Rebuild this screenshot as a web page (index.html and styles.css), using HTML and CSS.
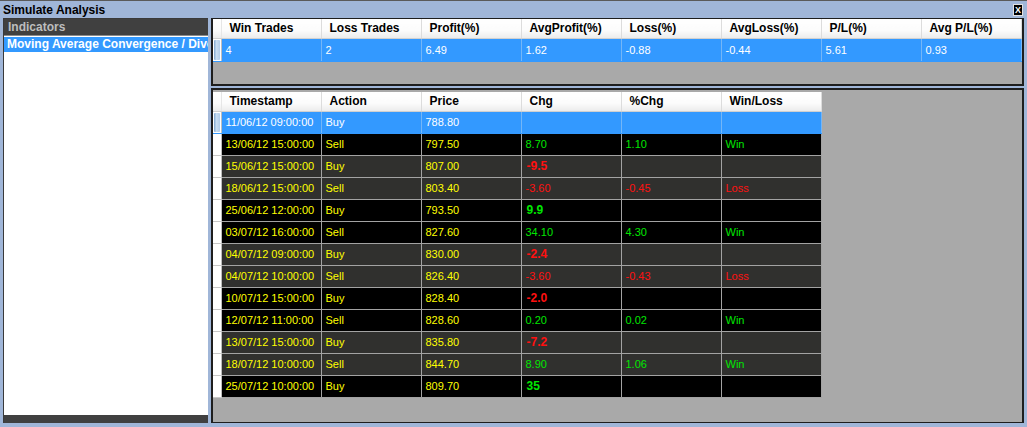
FILE: index.html
```html
<!DOCTYPE html>
<html lang="en">
<head>
    <meta charset="UTF-8">
    <title>Simulate Analysis</title>
    <link rel="stylesheet" href="styles.css">
</head>
<body>
    <div class="window">
        <div class="titlebar">
            <span class="title">Simulate Analysis</span>
            <span class="close">X</span>
        </div>

        <div class="main">
            <div class="indicators">
                <div class="ind-header">Indicators</div>
                <div class="ind-list">
                    <div class="ind-item selected">Moving Average Convergence / Divergence</div>
                </div>
                <div class="ind-footer"></div>
            </div>

            <div class="results">
                <div class="panel summary">
                    <table class="grid">
                        <colgroup>
                            <col class="c-ind">
                            <col class="c-col"><col class="c-col"><col class="c-col"><col class="c-col">
                            <col class="c-col"><col class="c-col"><col class="c-col"><col class="c-col">
                        </colgroup>
                        <thead>
                            <tr>
                                <th class="ind"></th>
                                <th>Win Trades</th>
                                <th>Loss Trades</th>
                                <th>Profit(%)</th>
                                <th>AvgProfit(%)</th>
                                <th>Loss(%)</th>
                                <th>AvgLoss(%)</th>
                                <th>P/L(%)</th>
                                <th>Avg P/L(%)</th>
                            </tr>
                        </thead>
                        <tbody>
                            <tr class="current">
                                <td class="ind"><span class="marker"></span></td>
                                <td>4</td>
                                <td>2</td>
                                <td>6.49</td>
                                <td>1.62</td>
                                <td>-0.88</td>
                                <td>-0.44</td>
                                <td>5.61</td>
                                <td>0.93</td>
                            </tr>
                        </tbody>
                    </table>
                </div>

                <div class="panel trades">
                    <table class="grid">
                        <colgroup>
                            <col class="c-ind">
                            <col class="c-col"><col class="c-col"><col class="c-col">
                            <col class="c-col"><col class="c-col"><col class="c-col">
                        </colgroup>
                        <thead>
                            <tr>
                                <th class="ind"></th>
                                <th>Timestamp</th>
                                <th>Action</th>
                                <th>Price</th>
                                <th>Chg</th>
                                <th>%Chg</th>
                                <th>Win/Loss</th>
                            </tr>
                        </thead>
                        <tbody id="trade-rows"></tbody>
                    </table>
                </div>
            </div>
        </div>
        <div class="bottom-edge"></div>
    </div>

    <script>
        // [timestamp, action, price, chg, %chg, win/loss]
        const trades = [
            ["11/06/12 09:00:00", "Buy", "788.80", "", "", ""],
            ["13/06/12 15:00:00", "Sell", "797.50", "8.70", "1.10", "Win"],
            ["15/06/12 15:00:00", "Buy", "807.00", "-9.5", "", ""],
            ["18/06/12 15:00:00", "Sell", "803.40", "-3.60", "-0.45", "Loss"],
            ["25/06/12 12:00:00", "Buy", "793.50", "9.9", "", ""],
            ["03/07/12 16:00:00", "Sell", "827.60", "34.10", "4.30", "Win"],
            ["04/07/12 09:00:00", "Buy", "830.00", "-2.4", "", ""],
            ["04/07/12 10:00:00", "Sell", "826.40", "-3.60", "-0.43", "Loss"],
            ["10/07/12 15:00:00", "Buy", "828.40", "-2.0", "", ""],
            ["12/07/12 11:00:00", "Sell", "828.60", "0.20", "0.02", "Win"],
            ["13/07/12 15:00:00", "Buy", "835.80", "-7.2", "", ""],
            ["18/07/12 10:00:00", "Sell", "844.70", "8.90", "1.06", "Win"],
            ["25/07/12 10:00:00", "Buy", "809.70", "35", "", ""]
        ];

        function sign(value) {
            if (value === "") return "";
            return value.startsWith("-") ? "neg" : "pos";
        }

        const body = document.getElementById('trade-rows');
        body.innerHTML = trades.map((t, i) => {
            // each buy/sell pair shares a shade
            const shade = Math.floor(i / 2) % 2 === 0 ? 'dark' : 'grey';
            const rowClass = i === 0 ? 'current' : shade;
            const chgClass = t[1] === 'Buy' ? 'big ' + sign(t[3]) : sign(t[3]);
            const result = t[5] === 'Win' ? 'pos' : 'neg';
            return `
                <tr class="${rowClass}">
                    <td class="ind">${i === 0 ? '<span class="marker"></span>' : ''}</td>
                    <td class="yellow">${t[0]}</td>
                    <td class="yellow">${t[1]}</td>
                    <td class="yellow">${t[2]}</td>
                    <td class="${chgClass}">${t[3]}</td>
                    <td class="${sign(t[4])}">${t[4]}</td>
                    <td class="${result}">${t[5]}</td>
                </tr>`;
        }).join('');
    </script>
</body>
</html>
```

FILE: styles.css
```css
* {
    box-sizing: border-box;
    margin: 0;
    padding: 0;
}

body {
    font-family: "Liberation Sans", Arial, sans-serif;
    background: #a0b6d8;
    width: 1027px;
    height: 427px;
    overflow: hidden;
}

.window {
    display: flex;
    flex-direction: column;
    height: 427px;
    border-top: 1px solid #5a5a5a;
}

.titlebar {
    height: 17px;
    display: flex;
    align-items: center;
    justify-content: space-between;
    padding: 0 4px 0 3px;
}

.title {
    font-size: 12px;
    font-weight: bold;
    color: #000;
}

.close {
    width: 10px;
    height: 12px;
    background: #000;
    color: #fff;
    border: 1px solid #e0e0e0;
    font-size: 9px;
    font-weight: bold;
    line-height: 10px;
    text-align: center;
}

.main {
    flex: 1;
    display: flex;
    gap: 3px;
    padding: 0 3px;
    min-height: 0;
}

/* left list */
.indicators {
    width: 205px;
    display: flex;
    flex-direction: column;
    border-left: 1px solid #3a3a3a;
    border-top: 1px solid #3a3a3a;
}

.ind-header {
    height: 17px;
    background: #404040;
    color: #bdbdbd;
    font-size: 12px;
    font-weight: bold;
    padding: 1px 0 0 4px;
    border-bottom: 1px solid #8a8a8a;
}

.ind-list {
    flex: 1;
    background: #fff;
    padding-top: 1px;
}

.ind-item {
    height: 15px;
    font-size: 12px;
    font-weight: bold;
    line-height: 15px;
    padding-left: 3px;
    white-space: nowrap;
    overflow: hidden;
}

.ind-item.selected {
    background: #3399ff;
    color: #fff;
}

.ind-footer {
    height: 8px;
    background: #404040;
}

/* right side */
.results {
    flex: 1;
    display: flex;
    flex-direction: column;
}

.panel {
    background: #a9a9a9;
    border: 2px solid #1e1e1e;
    border-top-width: 1px;
    overflow: hidden;
}

.summary {
    height: 68px;
}

.trades {
    flex: 1;
    margin-top: 2px;
    border-top-width: 2px;
    border-bottom-width: 1px;
    padding-top: 2px;
}

.grid {
    border-collapse: collapse;
    table-layout: fixed;
}

.c-ind {
    width: 8px;
}

.c-col {
    width: 100px;
}

.grid th {
    height: 19px;
    text-align: left;
    font-size: 12px;
    font-weight: bold;
    color: #000;
    padding: 0 0 1px 8px;
    background: linear-gradient(#ffffff, #fbfbfb 60%, #ececec);
    border-right: 1px solid #dcdcdc;
    border-bottom: 1px solid #d0d0d0;
    white-space: nowrap;
}

.grid th.ind {
    padding: 0;
    border-right: 1px solid #e6e6e6;
}

.grid td {
    font-size: 11px;
    padding: 0 0 0 4px;
    border-right: 1px solid #a3a3a3;
    border-bottom: 1px solid #a3a3a3;
    white-space: nowrap;
    overflow: hidden;
}

.trades .grid td {
    height: 22px;
}

.summary .grid td {
    height: 23px;
}

.grid td.ind {
    padding: 0;
    background: #fff;
    border-right: 1px solid #bdbdbd;
    border-bottom: 1px solid #c8c8c8;
    position: relative;
}

.marker {
    position: absolute;
    left: 1px;
    top: 1px;
    bottom: 1px;
    width: 6px;
    background: linear-gradient(90deg, #7ea6cf, #c9def3 40%, #b2cde9);
    border-radius: 1px;
}

.grid tr.current td {
    background: #3399ff;
    color: #fff;
    border-right-color: #74b6f7;
    border-bottom-color: #3399ff;
}

.grid tr.current td.ind {
    background: #fff;
    border-right-color: #bdbdbd;
}

.grid tr.dark td {
    background: #000;
}

.grid tr.grey td {
    background: #30302e;
}

.grid tr.dark td.ind,
.grid tr.grey td.ind {
    background: #fff;
}

.yellow {
    color: #ffff00;
}

.pos {
    color: #00e600;
}

.neg {
    color: #ff1010;
}

.grid td.big {
    font-size: 12px;
    font-weight: bold;
    padding-left: 5px;
}

.bottom-edge {
    height: 4px;
}
```
